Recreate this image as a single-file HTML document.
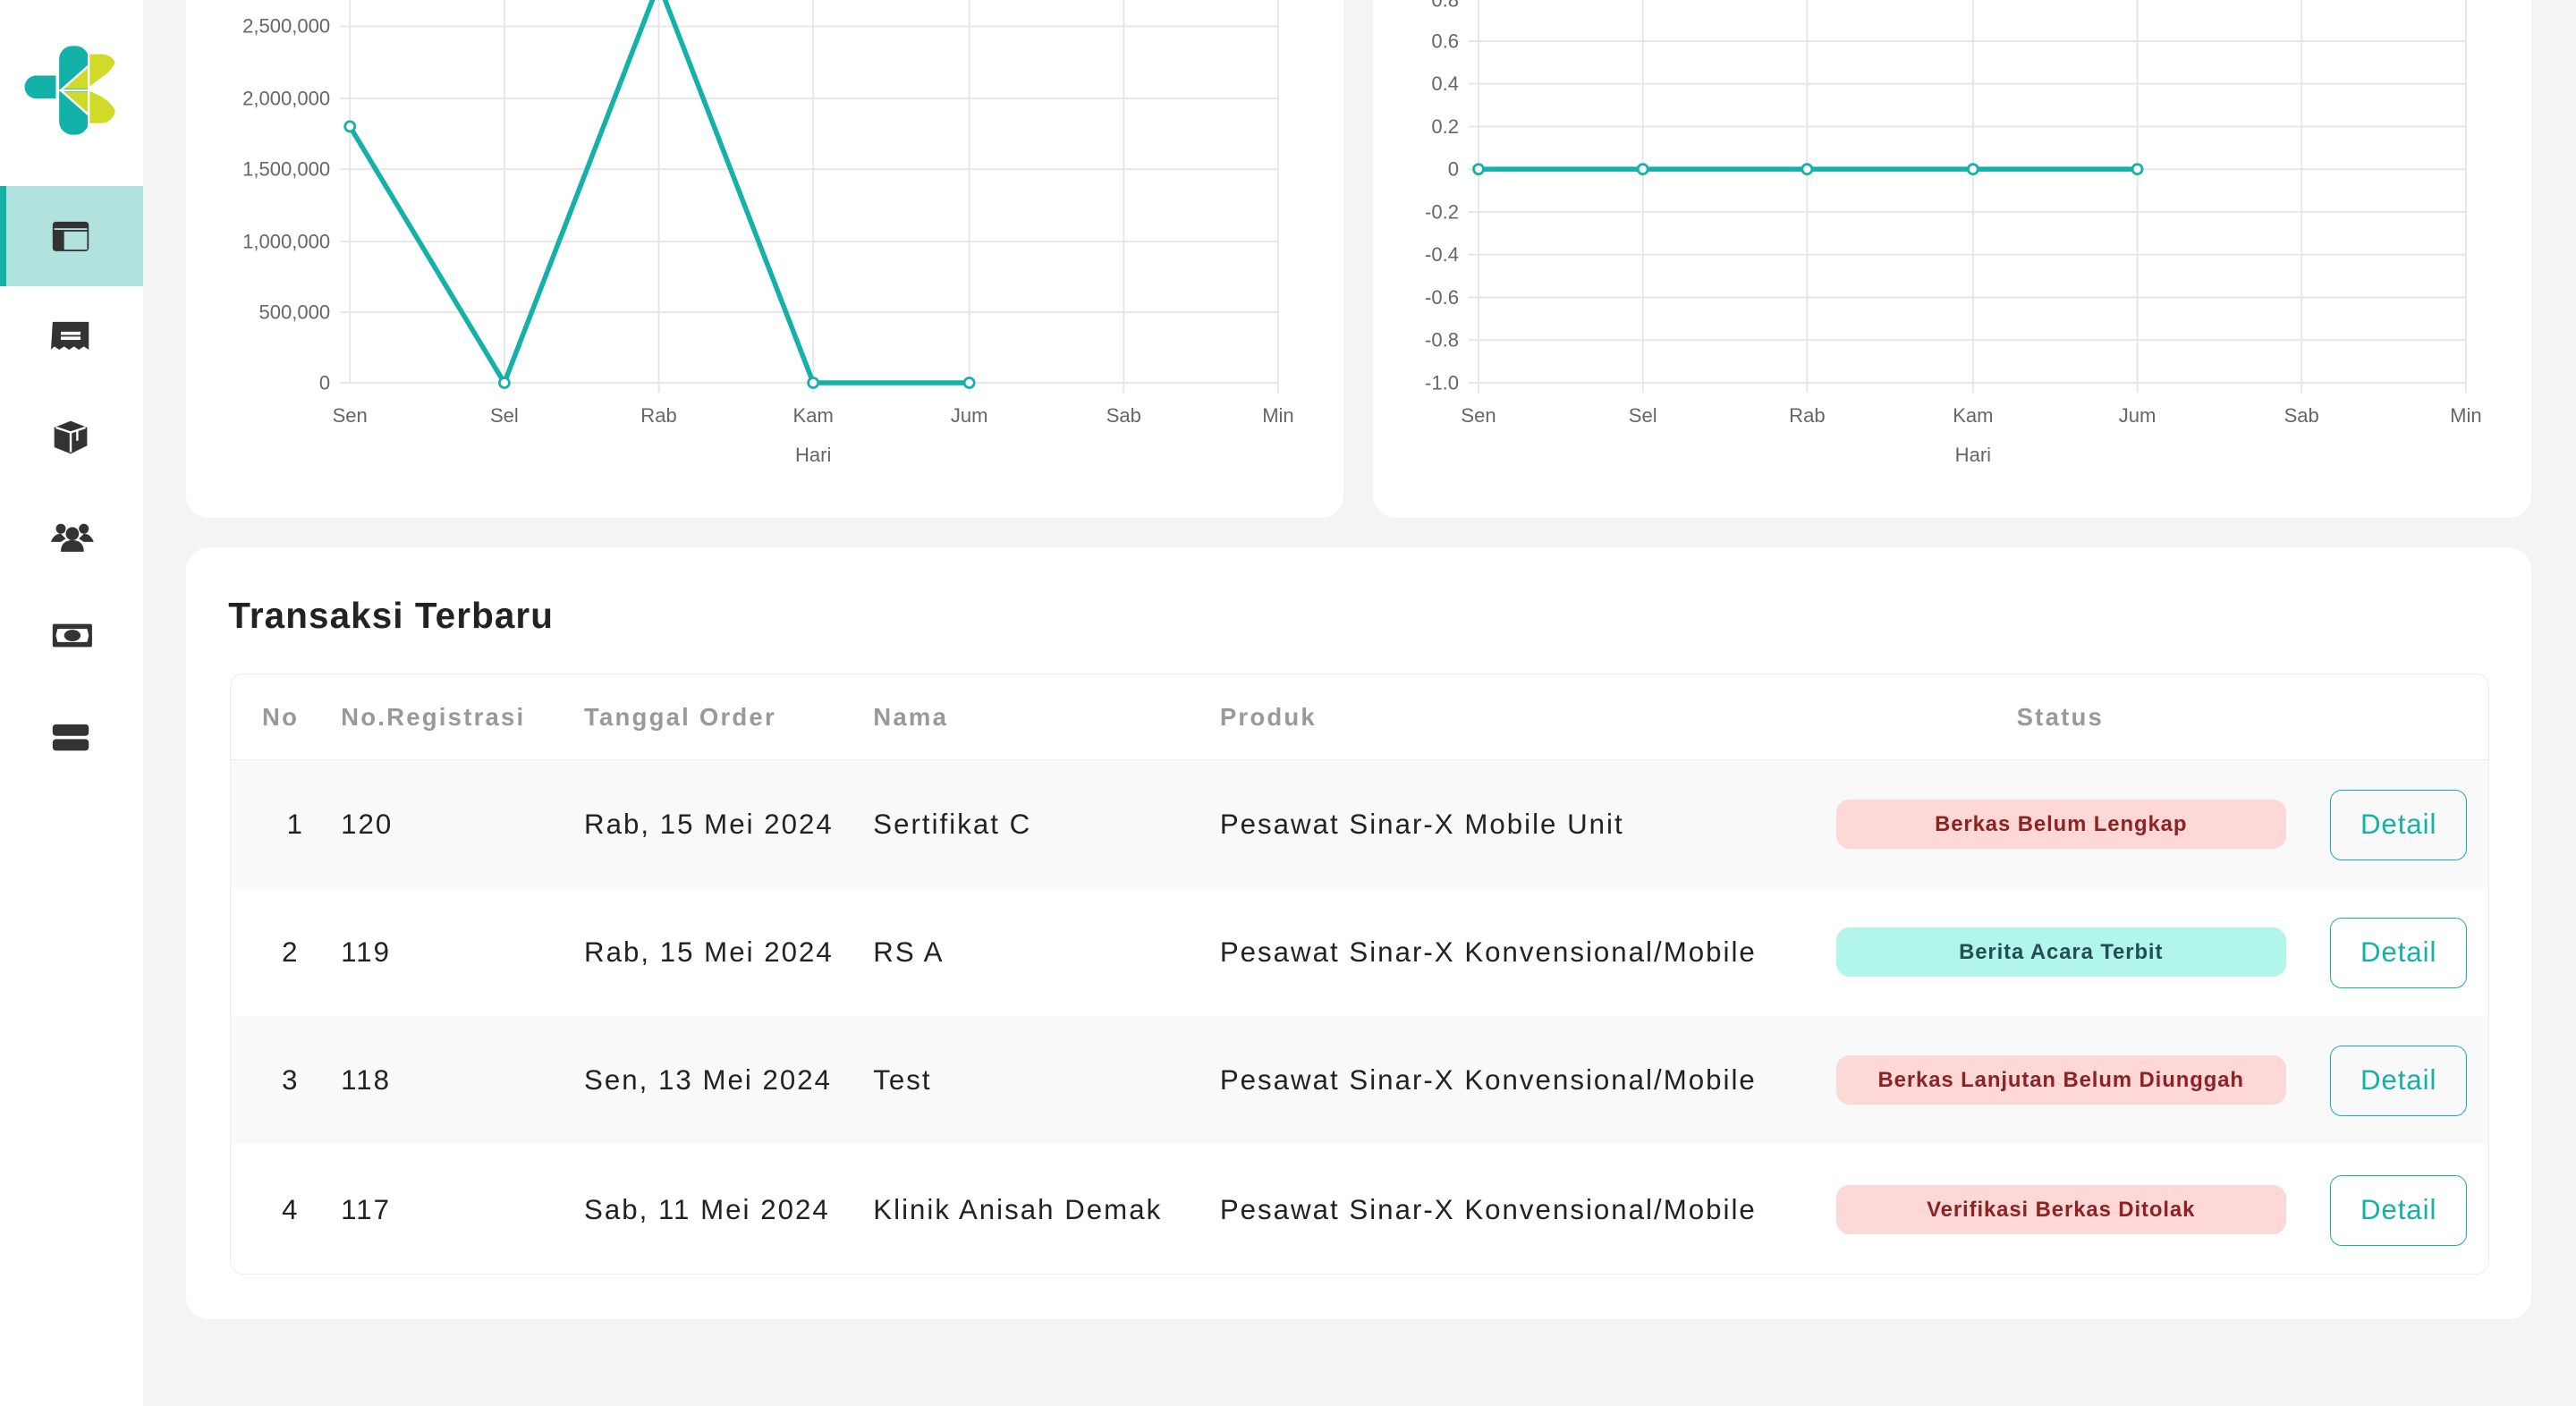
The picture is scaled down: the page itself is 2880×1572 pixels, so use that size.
<!DOCTYPE html>
<html><head><meta charset="utf-8"><style>
*{box-sizing:border-box;margin:0;padding:0}
html,body{width:2880px;height:1572px;overflow:hidden;background:#f4f4f4}
#root{zoom:1.8367;width:1568px;height:856px;position:relative;font-family:"Liberation Sans",sans-serif;color:#222}
.sb{position:absolute;left:0;top:0;width:87px;height:856px;background:#fff}
.card{position:absolute;background:#fff;border-radius:14px}
.ico{position:absolute;left:31px}
.t{position:absolute;left:140px;top:410px;width:1375px;height:366px;border:1px solid #eee;border-radius:8px;overflow:hidden}
.row{position:absolute;left:0;width:1375px;height:78px;font-size:17px;color:#222;letter-spacing:1.1px}
.row span{position:absolute;top:0;line-height:78px}
.hd span{position:absolute;line-height:52px;font-size:15px;font-weight:bold;color:#999;letter-spacing:1.2px}
.badge{position:absolute;left:977px;top:24px;width:274px;height:30px;border-radius:8px;font-size:13px;font-weight:bold;text-align:center;line-height:30px;letter-spacing:.5px}
.red{background:#fed7d7;color:#8b2323}.grn{background:#b2f5ea;color:#234e52}
.btn{position:absolute;left:1278px;top:18px;width:83px;height:43px;border:1px solid #14b1a8;border-radius:7px;color:#14b1a8;font-size:17px;text-align:center;line-height:41px;letter-spacing:.5px}
</style></head><body><div id="root">
<div class="sb">
<svg style="position:absolute;left:0;top:0" width="87" height="100" viewBox="0 0 87 100">
<path d="M22 46h12v14H22a7 7 0 0 1 0-14z" fill="#14b1a8"/>
<path d="M36 36a8 8 0 0 1 8-8h2a8 8 0 0 1 8 8v20H36z" fill="#14b1a8"/>
<path d="M36 54h18v20a8 8 0 0 1-8 8h-2a8 8 0 0 1-8-8z" fill="#14b1a8"/>
<path d="M54 33h8c5 0 8 4 8 5s-3 6-8 9l-8 6z" fill="#cfdb26"/>
<path d="M54 55l8 4c5 3 8 7 8 9s-3 7-8 7h-8z" fill="#cfdb26"/>
<path d="M38 54L54 40v14z" fill="#cfdb26"/><path d="M38 56l16 0v14z" fill="#cfdb26"/>
<path d="M36 55H70M54 30v50M37 55l17-15M37 55l17 15" stroke="#fff" stroke-width="1.3" fill="none"/>
</svg>
<div style="position:absolute;left:0;top:113px;width:87px;height:61px;background:#b2e2de"></div>
<div style="position:absolute;left:0;top:113px;width:4px;height:61px;background:#14b1a8"></div>
<svg class="ico" style="top:134px" width="24" height="20"><rect x="1" y="1" width="22" height="18" rx="2" fill="#333"/><rect x="8" y="7" width="14" height="11" fill="#b2e2de"/><rect x="2" y="5" width="20" height="1" fill="#b2e2de"/></svg>
<svg class="ico" style="top:195px" width="24" height="20"><path d="M1 1h22v17l-3-2-3 2-3-2-3 2-3-2-3 2-3-2-2 2z" fill="#333"/><rect x="6" y="7" width="12" height="2" fill="#fff"/><rect x="6" y="10" width="12" height="2" fill="#fff"/></svg>
<svg class="ico" style="top:254px" width="24" height="24"><path d="M12 2l10 4v11l-10 5-10-4V6z" fill="#333"/><path d="M3 6l9 3 9-3M12 9v12M16 8v6" stroke="#fff" stroke-width="1.3" fill="none"/></svg>
<svg class="ico" style="top:317px" width="26" height="20"><circle cx="13" cy="8" r="4" fill="#333"/><path d="M6 19c0-5 3-7 7-7s7 2 7 7z" fill="#333"/><circle cx="6" cy="5" r="3" fill="#333"/><circle cx="20" cy="5" r="3" fill="#333"/><path d="M0 13c1-3 3-5 6-5l3 3-3 2z M26 13c-1-3-3-5-6-5l-3 3 3 2z" fill="#333"/></svg>
<svg class="ico" style="top:378px" width="26" height="18"><rect x="1" y="2" width="24" height="14" rx="1" fill="#333"/><path d="M4 5h18l1 4-1 4H4l-1-4z" fill="#fff"/><ellipse cx="13" cy="9" rx="5" ry="3.5" fill="#333"/></svg>
<svg class="ico" style="top:440px" width="24" height="18"><rect x="1" y="1" width="22" height="7" rx="2" fill="#333"/><rect x="1" y="10" width="22" height="7" rx="2" fill="#333"/></svg>
</div>

<div class="card" style="left:113px;top:-20px;width:705px;height:335px"></div>
<div class="card" style="left:836px;top:-20px;width:705px;height:335px"></div>
<svg style="position:absolute;left:0;top:0" width="1568" height="320" font-family="Liberation Sans" font-size="12" fill="#666">
<g stroke="#e5e5e5" stroke-width="1">
<path d="M213 0V233M307 0V239M401 0V239M495 0V239M590 0V239M684 0V239M778 0V239"/>
<path d="M207 16H778M207 60H778M207 103H778M207 147H778M207 190H778M207 233H778"/>
<path d="M900 0V239M1000 0V239M1100 0V239M1201 0V239M1301 0V239M1401 0V239M1501 0V239"/>
<path d="M894 25H1501M894 51H1501M894 77H1501M894 103H1501M894 129H1501M894 155H1501M894 181H1501M894 207H1501M894 233H1501"/>
</g>
<g text-anchor="end">
<text x="201" y="20">2,500,000</text><text x="201" y="64">2,000,000</text><text x="201" y="107">1,500,000</text><text x="201" y="151">1,000,000</text><text x="201" y="194">500,000</text><text x="201" y="237">0</text>
<text x="888" y="4">0.8</text><text x="888" y="29">0.6</text><text x="888" y="55">0.4</text><text x="888" y="81">0.2</text><text x="888" y="107">0</text><text x="888" y="133">-0.2</text><text x="888" y="159">-0.4</text><text x="888" y="185">-0.6</text><text x="888" y="211">-0.8</text><text x="888" y="237">-1.0</text>
</g>
<g text-anchor="middle">
<text x="213" y="257">Sen</text><text x="307" y="257">Sel</text><text x="401" y="257">Rab</text><text x="495" y="257">Kam</text><text x="590" y="257">Jum</text><text x="684" y="257">Sab</text><text x="778" y="257">Min</text><text x="495" y="281">Hari</text>
<text x="900" y="257">Sen</text><text x="1000" y="257">Sel</text><text x="1100" y="257">Rab</text><text x="1201" y="257">Kam</text><text x="1301" y="257">Jum</text><text x="1401" y="257">Sab</text><text x="1501" y="257">Min</text><text x="1201" y="281">Hari</text>
</g>
<polyline points="213,77 307,233 401,-10 495,233 590,233" fill="none" stroke="#14b1a8" stroke-width="3"/>
<polyline points="900,103 1301,103" fill="none" stroke="#14b1a8" stroke-width="3"/>
<g fill="#fff" stroke="#14b1a8" stroke-width="1.5">
<circle cx="213" cy="77" r="3"/><circle cx="307" cy="233" r="3"/><circle cx="495" cy="233" r="3"/><circle cx="590" cy="233" r="3"/>
<circle cx="900" cy="103" r="3"/><circle cx="1000" cy="103" r="3"/><circle cx="1100" cy="103" r="3"/><circle cx="1201" cy="103" r="3"/><circle cx="1301" cy="103" r="3"/>
</g>
</svg>

<div class="card" style="left:113px;top:333px;width:1428px;height:470px"></div>
<div style="position:absolute;left:139px;top:362px;font-size:22px;font-weight:bold;color:#222;letter-spacing:.6px">Transaksi Terbaru</div>
<div class="t">
<div class="hd" style="position:absolute;left:0;top:0;width:1375px;height:52px;border-bottom:1px solid #eee">
<span style="left:19px">No</span><span style="left:67px">No.Registrasi</span><span style="left:215px">Tanggal Order</span><span style="left:391px">Nama</span><span style="left:602px">Produk</span><span style="left:1087px">Status</span></div>
<div class="row" style="top:52px;background:#f9f9f9"><span style="left:34px">1</span><span style="left:67px">120</span><span style="left:215px">Rab, 15 Mei 2024</span><span style="left:391px">Sertifikat C</span><span style="left:602px">Pesawat Sinar-X Mobile Unit</span><div class="badge red">Berkas Belum Lengkap</div><div class="btn">Detail</div></div>
<div class="row" style="top:130px;background:#fff"><span style="left:31px">2</span><span style="left:67px">119</span><span style="left:215px">Rab, 15 Mei 2024</span><span style="left:391px">RS A</span><span style="left:602px">Pesawat Sinar-X Konvensional/Mobile</span><div class="badge grn">Berita Acara Terbit</div><div class="btn">Detail</div></div>
<div class="row" style="top:208px;background:#f9f9f9"><span style="left:31px">3</span><span style="left:67px">118</span><span style="left:215px">Sen, 13 Mei 2024</span><span style="left:391px">Test</span><span style="left:602px">Pesawat Sinar-X Konvensional/Mobile</span><div class="badge red">Berkas Lanjutan Belum Diunggah</div><div class="btn">Detail</div></div>
<div class="row" style="top:287px;background:#fff"><span style="left:31px">4</span><span style="left:67px">117</span><span style="left:215px">Sab, 11 Mei 2024</span><span style="left:391px">Klinik Anisah Demak</span><span style="left:602px">Pesawat Sinar-X Konvensional/Mobile</span><div class="badge red">Verifikasi Berkas Ditolak</div><div class="btn">Detail</div></div>
</div>
</div></body></html>
